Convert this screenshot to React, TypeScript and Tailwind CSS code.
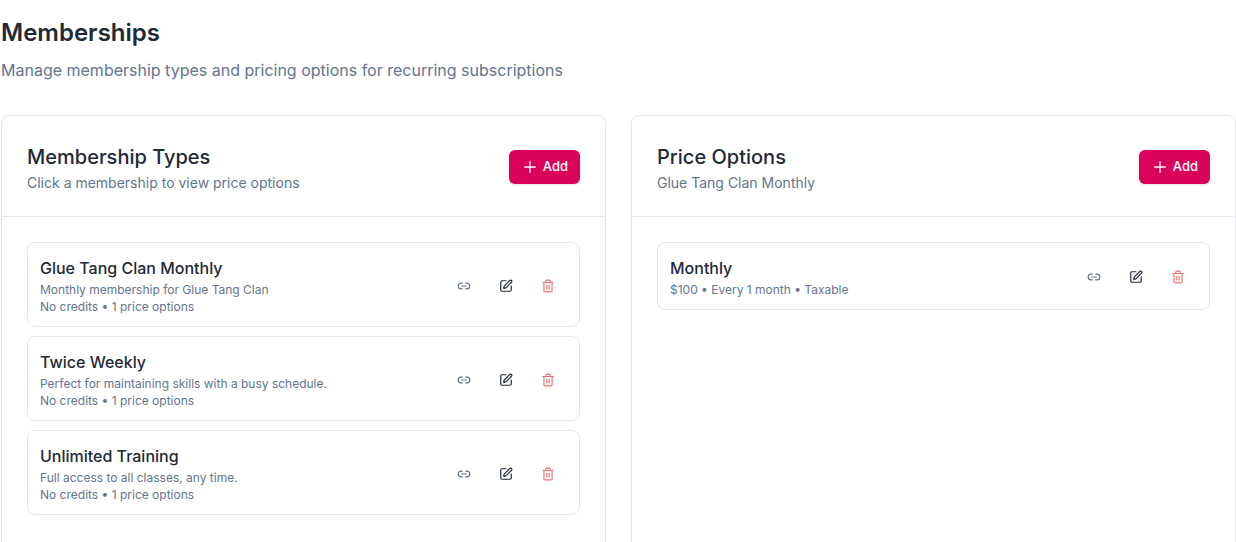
import type { ReactNode } from "react"
import { Link2, Plus, SquarePen, Trash2 } from "lucide-react"

interface PanelProps {
    title: string;
    subtitle: string;
    children: ReactNode;
}

interface ItemProps {
    name: string;
    lines: string[];
}

const memberships: ItemProps[] = [
    { name: "Glue Tang Clan Monthly", lines: ["Monthly membership for Glue Tang Clan", "No credits • 1 price options"] },
    { name: "Twice Weekly", lines: ["Perfect for maintaining skills with a busy schedule.", "No credits • 1 price options"] },
    { name: "Unlimited Training", lines: ["Full access to all classes, any time.", "No credits • 1 price options"] },
]

const prices: ItemProps[] = [
    { name: "Monthly", lines: ["$100 • Every 1 month • Taxable"] },
]

function Panel({ title, subtitle, children }: PanelProps) {
    return (
        <section className="min-h-[460px] rounded-lg border border-gray-200">
            {/* header */}
            <div className="flex items-center justify-between border-b border-gray-200 px-[25px] pt-[26px] pb-6">
                <div>
                    <h2 className="text-xl leading-[31px] font-medium">{title}</h2>
                    <p className="text-sm leading-[19px] text-[#64748b]">{subtitle}</p>
                </div>
                <button className="flex h-[34px] items-center gap-1 rounded-md bg-[#db0059] px-3 text-[13px] font-medium text-white shadow-sm cursor-pointer hover:bg-[#c20050]">
                    <Plus size={18} strokeWidth={1.75} />
                    Add
                </button>
            </div>

            {/* items */}
            <ul className="flex flex-col gap-[9px] px-[25px] py-[25px]">{children}</ul>
        </section>
    )
}

function Item({ name, lines }: ItemProps) {
    return (
        <li className="flex items-center justify-between rounded-lg border border-gray-200 pt-[13px] pr-[14px] pb-[11px] pl-3">
            <div>
                <h3 className="text-base leading-[25px] font-medium">{name}</h3>
                {lines.map((line) => (
                    <p key={line} className="text-xs leading-[17px] text-[#64748b]">{line}</p>
                ))}
            </div>
            <div className="flex gap-2">
                <button aria-label={`Copy link to ${name}`} className="flex size-[34px] items-center justify-center rounded-md text-[#64748b] cursor-pointer hover:bg-gray-100">
                    <Link2 size={14} />
                </button>
                <button aria-label={`Edit ${name}`} className="flex size-[34px] items-center justify-center rounded-md cursor-pointer hover:bg-gray-100">
                    <SquarePen size={14} />
                </button>
                <button aria-label={`Delete ${name}`} className="flex size-[34px] items-center justify-center rounded-md text-[#ef7272] cursor-pointer hover:bg-gray-100">
                    <Trash2 size={14} />
                </button>
            </div>
        </li>
    )
}

export default function App() {
    return (
        <main className="bg-white pt-4 pl-px font-['Inter',sans-serif] text-[#1f2937]">
            <h1 className="text-2xl leading-[34px] font-semibold">Memberships</h1>
            <p className="mt-2 text-base leading-6 text-[#64748b]">Manage membership types and pricing options for recurring subscriptions</p>

            <div className="mt-[33px] grid grid-cols-2 gap-[25px]">
                <Panel title="Membership Types" subtitle="Click a membership to view price options">
                    {memberships.map((m) => <Item key={m.name} {...m} />)}
                </Panel>
                <Panel title="Price Options" subtitle="Glue Tang Clan Monthly">
                    {prices.map((p) => <Item key={p.name} {...p} />)}
                </Panel>
            </div>
        </main>
    )
}
